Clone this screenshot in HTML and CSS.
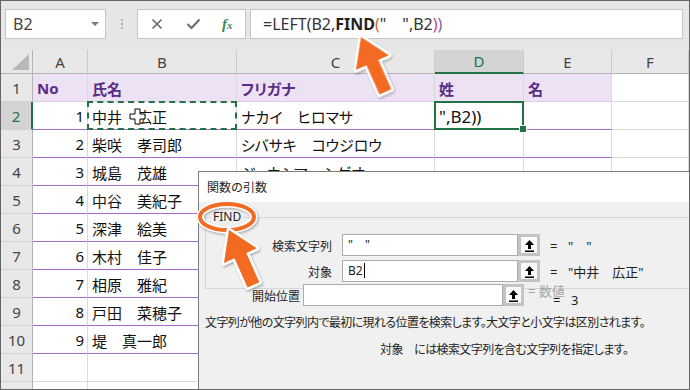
FILE: index.html
```html
<!DOCTYPE html>
<html lang="ja">
<head>
    <meta charset="UTF-8">
    <meta name="viewport" content="width=device-width, initial-scale=1.0">
    <title>FIND関数</title>
    <link rel="stylesheet" href="styles.css">
</head>
<body>
<div class="window">
    <div class="formula-row">
        <div class="name-box">
            <span>B2</span>
            <span class="drop"></span>
        </div>
        <div class="grip"><i></i><i></i><i></i></div>
        <div class="fx-buttons">
            <svg class="icon-cancel" width="12" height="12" viewBox="0 0 12 12">
                <path d="M1.5 1.5 L10.5 10.5 M10.5 1.5 L1.5 10.5" stroke="#6b6b6b" stroke-width="1.7" fill="none"/>
            </svg>
            <svg class="icon-enter" width="15" height="12" viewBox="0 0 15 12">
                <path d="M1.5 6 L5.5 10 L13.5 1.5" stroke="#6b6b6b" stroke-width="2" fill="none"/>
            </svg>
            <span class="fx">f<small>x</small></span>
        </div>
        <div class="formula-input">=LEFT(B2,<b>FIND</b><span class="p-open">(</span>"　",B2<span class="p-mid">)</span><span class="p-end">)</span></div>
    </div>

    <div class="sheet">
        <div class="corner"><span></span></div>
        <div class="ch">A</div>
        <div class="ch">B</div>
        <div class="ch">C</div>
        <div class="ch sel">D</div>
        <div class="ch">E</div>
        <div class="ch">F</div>

        <div class="rh">1</div>
        <div class="c hd">No</div>
        <div class="c hd">氏名</div>
        <div class="c hd">フリガナ</div>
        <div class="c hd">姓</div>
        <div class="c hd">名</div>
        <div class="c"></div>

        <div class="rh sel">2</div>
        <div class="c td num">1</div>
        <div class="c td copy">中井　広正</div>
        <div class="c td">ナカイ　ヒロマサ</div>
        <div class="c td active">",B2))</div>
        <div class="c td"></div>
        <div class="c"></div>

        <div class="rh">3</div>
        <div class="c td num">2</div>
        <div class="c td">柴咲　孝司郎</div>
        <div class="c td">シバサキ　コウジロウ</div>
        <div class="c td"></div>
        <div class="c td"></div>
        <div class="c"></div>

        <div class="rh">4</div>
        <div class="c td num">3</div>
        <div class="c td">城島　茂雄</div>
        <div class="c td">ジョウシマ　シゲオ</div>
        <div class="c td"></div>
        <div class="c td"></div>
        <div class="c"></div>

        <div class="rh">5</div>
        <div class="c td num">4</div>
        <div class="c td">中谷　美紀子</div>
        <div class="c td"></div>
        <div class="c td"></div>
        <div class="c td"></div>
        <div class="c"></div>

        <div class="rh">6</div>
        <div class="c td num">5</div>
        <div class="c td">深津　絵美</div>
        <div class="c td"></div>
        <div class="c td"></div>
        <div class="c td"></div>
        <div class="c"></div>

        <div class="rh">7</div>
        <div class="c td num">6</div>
        <div class="c td">木村　佳子</div>
        <div class="c td"></div>
        <div class="c td"></div>
        <div class="c td"></div>
        <div class="c"></div>

        <div class="rh">8</div>
        <div class="c td num">7</div>
        <div class="c td">相原　雅紀</div>
        <div class="c td"></div>
        <div class="c td"></div>
        <div class="c td"></div>
        <div class="c"></div>

        <div class="rh">9</div>
        <div class="c td num">8</div>
        <div class="c td">戸田　菜穂子</div>
        <div class="c td"></div>
        <div class="c td"></div>
        <div class="c td"></div>
        <div class="c"></div>

        <div class="rh">10</div>
        <div class="c td num">9</div>
        <div class="c td">堤　真一郎</div>
        <div class="c td"></div>
        <div class="c td"></div>
        <div class="c td"></div>
        <div class="c"></div>

        <div class="rh">11</div>
        <div class="c"></div>
        <div class="c"></div>
        <div class="c"></div>
        <div class="c"></div>
        <div class="c"></div>
        <div class="c"></div>

        <div class="rh">12</div>
        <div class="c"></div>
        <div class="c"></div>
        <div class="c"></div>
        <div class="c"></div>
        <div class="c"></div>
        <div class="c"></div>
    </div>

    <div class="dialog">
        <div class="dialog-title">関数の引数</div>
        <div class="dialog-body">
            <div class="group">
                <div class="legend">FIND</div>
                <div class="arg">
                    <div class="arg-label">検索文字列</div>
                    <div class="arg-input">"　"</div>
                    <div class="ref-btn">
                        <svg width="11" height="13" viewBox="0 0 11 13"><path d="M5.5 1 L10 6 H7 V10 H4 V6 H1 Z M1 11.5 H10 V13 H1 Z" fill="#000"/></svg>
                    </div>
                    <div class="arg-result"><span class="eq">=</span>"　"</div>
                </div>
                <div class="arg">
                    <div class="arg-label">対象</div>
                    <div class="arg-input">B2<span class="text-cursor"></span></div>
                    <div class="ref-btn">
                        <svg width="11" height="13" viewBox="0 0 11 13"><path d="M5.5 1 L10 6 H7 V10 H4 V6 H1 Z M1 11.5 H10 V13 H1 Z" fill="#000"/></svg>
                    </div>
                    <div class="arg-result"><span class="eq">=</span>"中井　広正"</div>
                </div>
            </div>
            <div class="arg start">
                <div class="arg-label">開始位置</div>
                <div class="arg-input"></div>
                <div class="ref-btn">
                    <svg width="11" height="13" viewBox="0 0 11 13"><path d="M5.5 1 L10 6 H7 V10 H4 V6 H1 Z M1 11.5 H10 V13 H1 Z" fill="#000"/></svg>
                </div>
                <div class="arg-result stack">
                    <span class="hint">= 数値</span>
                    <span class="value"><span class="eq">=</span>3</span>
                </div>
            </div>
            <p class="desc">文字列が他の文字列内で最初に現れる位置を検索します。大文字と小文字は区別されます。</p>
            <p class="note">対象　には検索文字列を含む文字列を指定します。</p>
        </div>
    </div>

    <!-- callouts drawn over the screenshot -->
    <svg class="marks" width="690" height="390" viewBox="0 0 690 390">
        <defs>
            <path id="arrow" d="M0 0 L18 28 L6.5 28 L6.5 60 L-6.5 60 L-6.5 28 L-18 28 Z"/>
            <filter id="shade" x="-30%" y="-30%" width="160%" height="160%">
                <feDropShadow dx="1" dy="1.5" stdDeviation="1.2" flood-color="#000" flood-opacity="0.3"/>
            </filter>
        </defs>
        <path class="cross" d="M135 109 h5 v5 h5 v5 h-5 v5 h-5 v-5 h-5 v-5 h5 z"/>
        <g filter="url(#shade)">
            <ellipse cx="227" cy="217" rx="27" ry="13" fill="none" stroke="#fff" stroke-width="7"/>
            <ellipse cx="227" cy="217" rx="27" ry="13" fill="none" stroke="#f36b21" stroke-width="4"/>
            <use href="#arrow" transform="translate(361 37) rotate(-24)" class="arrow"/>
            <use href="#arrow" transform="translate(229 230) rotate(-24)" class="arrow"/>
        </g>
    </svg>
</div>
</body>
</html>
```

FILE: styles.css
```css
* {
    margin: 0;
    padding: 0;
    box-sizing: border-box;
}

body {
    width: 690px;
    height: 390px;
    overflow: hidden;
    background: #fff;
    font-family: "Noto Sans", "Noto Sans CJK JP", sans-serif;
    color: #222;
}

.window {
    position: relative;
    width: 690px;
    height: 390px;
    border: 1px solid #656565;
    overflow: hidden;
    background: #fff;
}

/* formula bar */
.formula-row {
    height: 49px;
    background: #e6e6e6;
    display: flex;
    align-items: flex-start;
    padding: 8px 6px 0 4px;
}

.name-box {
    width: 101px;
    height: 30px;
    background: #fff;
    border: 1px solid #c6c6c6;
    display: flex;
    align-items: center;
    justify-content: space-between;
    padding: 0 6px 0 7px;
    font-size: 16px;
    color: #444;
}

.drop {
    width: 0;
    height: 0;
    border-left: 4px solid transparent;
    border-right: 4px solid transparent;
    border-top: 4px solid #7a7a7a;
}

.grip {
    margin-left: 15px;
    padding-top: 10px;
    display: flex;
    flex-direction: column;
    gap: 2px;
}

.grip i {
    display: block;
    width: 2px;
    height: 2px;
    background: #b2b2b2;
}

.fx-buttons {
    margin-left: 14px;
    width: 109px;
    height: 30px;
    background: #fff;
    border: 1px solid #c6c6c6;
    display: flex;
    align-items: center;
    padding-left: 13px;
}

.icon-enter {
    margin-left: 23px;
}

.fx {
    margin-left: 21px;
    font-family: "Liberation Serif", serif;
    font-style: italic;
    font-weight: bold;
    font-size: 15px;
    color: #3a8a5a;
    line-height: 1;
}

.fx small {
    font-size: 11px;
}

.formula-input {
    flex: 1;
    margin-left: 4px;
    height: 30px;
    background: #fff;
    border: 1px solid #c6c6c6;
    padding-left: 12px;
    font-size: 16px;
    line-height: 28px;
    color: #333;
    white-space: pre;
}

.formula-input b {
    font-weight: bold;
    color: #222;
}

.p-open { color: #e0602f; }
.p-mid { color: #c2409a; }
.p-end { color: #7d6a8c; }

/* sheet grid */
.sheet {
    display: grid;
    grid-template-columns: 32px 55px 149px 198px 89px 88px 1fr;
    grid-template-rows: 24px repeat(12, 28px);
    font-size: 15px;
}

.corner {
    background: #e8e8e8;
    border-right: 1px solid #b4b4b4;
    border-bottom: 1px solid #b4b4b4;
    display: flex;
    justify-content: flex-end;
    align-items: flex-end;
    padding: 0 3px 3px 0;
}

.corner span {
    width: 17px;
    height: 16px;
    background: #b8b8b8;
    clip-path: polygon(100% 0, 100% 100%, 0 100%);
}

.ch {
    background: #e8e8e8;
    border-right: 1px solid #cacaca;
    border-bottom: 1px solid #b4b4b4;
    display: flex;
    align-items: center;
    justify-content: center;
    color: #444;
}

.ch.sel {
    background: #d4d4d4;
    color: #217346;
    border-bottom: 2px solid #217346;
}

.rh {
    background: #e8e8e8;
    border-right: 1px solid #b4b4b4;
    border-bottom: 1px solid #d2d2d2;
    display: flex;
    align-items: center;
    justify-content: center;
    color: #444;
    padding-top: 1px;
}

.rh.sel {
    background: #d4d4d4;
    color: #217346;
    border-right: 2px solid #217346;
}

.c {
    position: relative;
    border-right: 1px solid #dadada;
    border-bottom: 1px solid #dadada;
    display: flex;
    align-items: center;
    padding: 1px 0 0 4px;
    white-space: nowrap;
    color: #111;
    font-feature-settings: "palt";
}

.hd {
    background: #ece2f4;
    border-bottom-color: #dccbea;
    font-weight: bold;
    color: #5b2c86;
}

.td {
    border-bottom-color: #a46ad1;
}

.num {
    justify-content: flex-end;
    padding: 1px 3px 0 0;
}

.copy::after,
.active::after {
    content: "";
    position: absolute;
    left: -1px;
    top: -1px;
    right: -1px;
    bottom: -1px;
    z-index: 2;
}

.copy::after {
    border: 2px dashed #217346;
}

.active {
    font-size: 17px;
}

.active::after {
    border: 2px solid #217346;
}

.active::before {
    content: "";
    position: absolute;
    right: -4px;
    bottom: -4px;
    width: 6px;
    height: 6px;
    background: #217346;
    border: 1px solid #fff;
    z-index: 3;
}

/* function arguments dialog */
.dialog {
    position: absolute;
    left: 197px;
    top: 170px;
    right: 0;
    bottom: 0;
    border-left: 1px solid #7d7d7d;
    border-top: 1px solid #7d7d7d;
    background: #f0f0f0;
    font-family: "Noto Sans CJK JP", sans-serif;
    font-size: 12px;
    color: #1e1e1e;
    z-index: 5;
}

.dialog-title {
    height: 30px;
    line-height: 30px;
    background: #fff;
    padding-left: 8px;
}

.dialog-body {
    padding-top: 15px;
}

.group {
    margin-left: 6px;
    border: 1px solid #d6d6d6;
    border-right: none;
    padding-bottom: 6px;
}

.legend {
    width: fit-content;
    margin: -9px 0 0 5px;
    padding: 0 2px;
    line-height: 16px;
    background: #f0f0f0;
    font-family: "Noto Sans", sans-serif;
}

.arg {
    display: flex;
    align-items: center;
    height: 22px;
    margin-top: 4px;
}

.legend + .arg {
    margin-top: 9px;
}

.arg-label {
    width: 126px;
    margin-right: 10px;
    text-align: right;
}

.arg-input {
    width: 176px;
    height: 22px;
    background: #fff;
    border: 1px solid #acacac;
    padding-left: 5px;
    line-height: 20px;
    font-family: "Noto Sans", "Noto Sans CJK JP", sans-serif;
    white-space: pre;
}

.text-cursor {
    display: inline-block;
    width: 1px;
    height: 15px;
    background: #000;
    vertical-align: -3px;
    margin-left: 1px;
}

.ref-btn {
    width: 22px;
    height: 22px;
    border: 3px solid #c4c4c4;
    background: #fbfbfb;
    display: flex;
    align-items: center;
    justify-content: center;
}

.arg-result {
    margin-left: 10px;
    white-space: pre;
    font-family: "Noto Sans", "Noto Sans CJK JP", sans-serif;
    font-size: 13px;
}

.eq {
    display: inline-block;
    width: 18px;
}

.arg.start {
    margin-top: -5px;
}

.start .arg-label {
    width: 101px;
    margin-right: 3px;
}

.start .arg-input {
    width: 200px;
}

.start .ref-btn {
    width: 21px;
}

.stack {
    margin-left: 4px;
    display: flex;
    flex-direction: column;
    line-height: 15px;
    padding-top: 2px;
}

.hint {
    color: #a4a4a4;
}

.stack .value {
    margin: -6px 0 0 25px;
}

.desc {
    margin: 8px 0 0 6px;
    line-height: 16px;
    white-space: nowrap;
    letter-spacing: -0.6px;
    font-feature-settings: "palt";
}

.note {
    margin: 11px 0 0 181px;
    line-height: 16px;
    white-space: nowrap;
    letter-spacing: -0.6px;
    font-feature-settings: "palt";
}

/* overlay marks */
.marks {
    position: absolute;
    left: -1px;
    top: -1px;
    z-index: 10;
    pointer-events: none;
}

.arrow {
    fill: #f36b21;
    stroke: #fff;
    stroke-width: 5;
    stroke-linejoin: round;
    paint-order: stroke;
}

.cross {
    fill: #fff;
    stroke: #000;
    stroke-width: 1;
}
```
